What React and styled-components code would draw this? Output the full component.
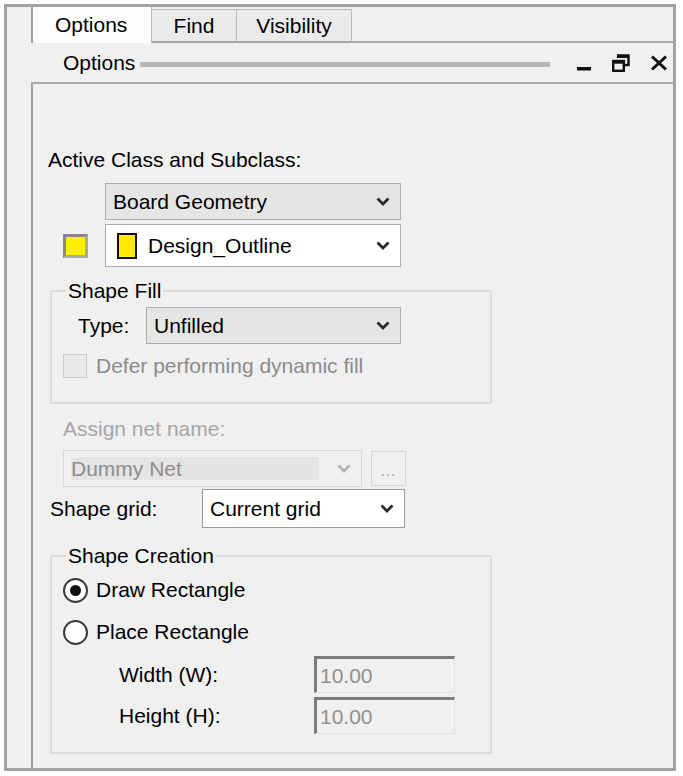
import React from "react";
import styled, { createGlobalStyle } from "styled-components";

const GlobalStyle = createGlobalStyle`
  html, body {
    margin: 0;
    padding: 0;
    background: #fff;
  }
  body {
    font-family: "Liberation Sans", Arial, sans-serif;
    font-size: 21px;
    color: #000;
  }
`;

const Frame = styled.div`
  box-sizing: border-box;
  margin: 4px 0 0 4px;
  width: 672px;
  height: 767px;
  border: 3px solid #a4a4a4;
  background: #f0f0f0;
  padding-left: 24px;
  display: flex;
  flex-direction: column;
`;

const TabStrip = styled.div`
  display: flex;
  align-items: flex-end;
  height: 36px;
  flex: 0 0 36px;
`;

const Tab = styled.div`
  box-sizing: border-box;
  height: ${(p) => (p.active ? "36px" : "34px")};
  width: ${(p) => p.w}px;
  display: flex;
  align-items: center;
  justify-content: ${(p) => (p.active ? "flex-start" : "center")};
  padding-left: ${(p) => (p.active ? "22px" : "0")};
  background: ${(p) => (p.active ? "#fdfdfd" : "#ebebeb")};
  border-left: ${(p) => (p.active ? "2px solid #a0a0a0" : "none")};
  border-right: 1px solid #b8b8b8;
  border-top: ${(p) => (p.active ? "none" : "1px solid #b8b8b8")};
  border-bottom: ${(p) => (p.active ? "none" : "2px solid #a8a8a8")};
`;

const TabFill = styled.div`
  flex: 1;
  border-bottom: 2px solid #a8a8a8;
`;

const TitleRow = styled.div`
  box-sizing: border-box;
  flex: 0 0 41px;
  display: flex;
  align-items: center;
  padding-left: 32px;
  border-bottom: 2px solid #a8a8a8;
`;

const Grip = styled.div`
  width: 410px;
  height: 5px;
  background: #b6b6b6;
  margin-left: 5px;
  margin-top: 4px;
`;

const TitleButtons = styled.div`
  display: flex;
  align-items: center;
  margin-left: 26px;
  gap: 20px;
`;

const Panel = styled.div`
  flex: 1;
  border-left: 2px solid #a0a0a0;
  padding-left: 15px;
  display: flex;
  flex-direction: column;
  align-items: flex-start;
`;

const Label = styled.div`
  line-height: 24px;
  white-space: nowrap;
  color: ${(p) => (p.disabled ? "#a6a6a6" : "#000")};
  margin-top: ${(p) => p.mt || 0}px;
  margin-left: ${(p) => p.ml || 0}px;
  width: ${(p) => (p.w ? `${p.w}px` : "auto")};
`;

const Combo = styled.div`
  box-sizing: border-box;
  width: ${(p) => p.w}px;
  height: ${(p) => p.h}px;
  margin-top: ${(p) => p.mt || 0}px;
  margin-left: ${(p) => p.ml || 0}px;
  display: flex;
  align-items: center;
  padding-left: ${(p) => p.pl || 7}px;
  padding-right: 10px;
  background: ${(p) => p.bg || "#fff"};
  border: 1px solid ${(p) => p.bc || "#adadad"};
  color: ${(p) => (p.disabled ? "#8d8d8d" : "#000")};
  white-space: nowrap;
`;

const ComboText = styled.div`
  flex: 1;
  display: flex;
  align-items: center;
  gap: 11px;
`;

const DisabledField = styled.div`
  flex: 1;
  height: 23px;
  background: #e4e4e4;
  margin-right: 18px;
  display: flex;
  align-items: center;
  color: #8d8d8d;
  padding-left: 0;
`;

const Row = styled.div`
  display: flex;
  align-items: center;
  margin-top: ${(p) => p.mt || 0}px;
  margin-left: ${(p) => p.ml || 0}px;
  height: ${(p) => (p.h ? `${p.h}px` : "auto")};
`;

const Swatch = styled.div`
  box-sizing: border-box;
  width: 25px;
  height: 24px;
  margin-left: 15px;
  margin-right: 17px;
  border: 3px solid;
  border-color: #888 #a8a8a8 #a8a8a8 #888;
  background: #ffee00;
`;

const ColorBox = styled.div`
  box-sizing: border-box;
  width: 20px;
  height: 26px;
  border: 2px solid #111;
  background: #ffea00;
  margin-left: 4px;
`;

const Group = styled.fieldset`
  box-sizing: border-box;
  width: 442px;
  margin: ${(p) => p.mt}px 0 0 2px;
  padding: ${(p) => p.pad};
  border: 2px solid #dcdcdc;
  border-radius: 2px;
  min-inline-size: 0;
`;

const Legend = styled.legend`
  margin-left: 14px;
  padding: 0 2px;
  line-height: 24px;
`;

const CheckBox = styled.div`
  box-sizing: border-box;
  width: 24px;
  height: 24px;
  border: 1px solid #c9c9c9;
  background: #e8e8e8;
  margin-left: 11px;
  margin-right: 9px;
`;

const Radio = styled.div`
  box-sizing: border-box;
  width: 25px;
  height: 25px;
  border-radius: 50%;
  border: 2px solid #3a3a3a;
  background: #fff;
  margin-left: 11px;
  margin-right: 8px;
  display: flex;
  align-items: center;
  justify-content: center;
  &::after {
    content: "";
    display: ${(p) => (p.checked ? "block" : "none")};
    width: 11px;
    height: 11px;
    border-radius: 50%;
    background: #111;
  }
`;

const EllipsisButton = styled.div`
  box-sizing: border-box;
  width: 35px;
  height: 35px;
  margin-left: 9px;
  border: 1px solid #d4d4d4;
  background: #f0f0f0;
  color: #9a9a9a;
  font-size: 15px;
  display: flex;
  align-items: flex-end;
  justify-content: center;
  padding-bottom: 6px;
  letter-spacing: 1px;
`;

const NumberField = styled.div`
  box-sizing: border-box;
  width: 141px;
  height: 37px;
  border: 1px solid #e2e2e2;
  border-top: 3px solid #7c7c7c;
  border-left: 3px solid #7c7c7c;
  background: #f0f0f0;
  color: #8f8f8f;
  display: flex;
  align-items: center;
  padding-left: 3px;
`;

function Chevron({ color = "#2a2a2a" }) {
  return (
    <svg width="14" height="9" viewBox="0 0 14 9">
      <polyline
        points="1.5,1.5 7,7 12.5,1.5"
        fill="none"
        stroke={color}
        strokeWidth="2.8"
      />
    </svg>
  );
}

function MinimizeIcon() {
  return (
    <svg width="16" height="18" viewBox="0 0 16 18">
      <rect x="1" y="13" width="14" height="3.5" fill="#111" />
    </svg>
  );
}

function RestoreIcon() {
  return (
    <svg width="18" height="18" viewBox="0 0 18 18">
      <path
        d="M5 1.5h11.5v9.5h-4.5"
        fill="none"
        stroke="#111"
        strokeWidth="2.4"
      />
      <rect x="5" y="1" width="11.5" height="3" fill="#111" />
      <rect
        x="1.2"
        y="7"
        width="10.6"
        height="9.8"
        fill="none"
        stroke="#111"
        strokeWidth="2.4"
      />
      <rect x="1" y="6.5" width="11" height="3.2" fill="#111" />
    </svg>
  );
}

function CloseIcon() {
  return (
    <svg width="18" height="16" viewBox="0 0 18 16">
      <path d="M2 1.5L16 14.5M16 1.5L2 14.5" stroke="#111" strokeWidth="3" />
    </svg>
  );
}

export default function App() {
  return (
    <>
      <GlobalStyle />
      <Frame>
        <TabStrip>
          <Tab active w={121}>
            Options
          </Tab>
          <Tab w={85}>Find</Tab>
          <Tab w={115}>Visibility</Tab>
          <TabFill />
        </TabStrip>
        <TitleRow>
          <span>Options</span>
          <Grip />
          <TitleButtons>
            <MinimizeIcon />
            <RestoreIcon />
            <CloseIcon />
          </TitleButtons>
        </TitleRow>
        <Panel>
          <Label mt={64}>Active Class and Subclass:</Label>
          <Combo w={296} h={37} mt={11} ml={57} bg="#e5e5e5">
            <ComboText>Board Geometry</ComboText>
            <Chevron />
          </Combo>
          <Row mt={4}>
            <Swatch />
            <Combo w={296} h={43} pl={7}>
              <ComboText>
                <ColorBox />
                Design_Outline
              </ComboText>
              <Chevron />
            </Combo>
          </Row>

          <Group mt={12} pad="4px 0 24px 0">
            <Legend>Shape Fill</Legend>
            <Row ml={26}>
              <Label w={68}>Type:</Label>
              <Combo w={255} h={37} bg="#e5e5e5">
                <ComboText>Unfilled</ComboText>
                <Chevron />
              </Combo>
            </Row>
            <Row mt={10}>
              <CheckBox />
              <Label disabled style={{ color: "#8b8b8b" }}>
                Defer performing dynamic fill
              </Label>
            </Row>
          </Group>

          <Label disabled mt={13} ml={15}>
            Assign net name:
          </Label>
          <Row mt={9} ml={15}>
            <Combo w={299} h={37} bg="#f0f0f0" bc="#d9d9d9" disabled>
              <DisabledField>Dummy Net</DisabledField>
              <Chevron color="#b4b4b4" />
            </Combo>
            <EllipsisButton>...</EllipsisButton>
          </Row>
          <Row mt={2} ml={2}>
            <Label w={152}>Shape grid:</Label>
            <Combo w={203} h={39} bc="#9a9a9a">
              <ComboText>Current grid</ComboText>
              <Chevron />
            </Combo>
          </Row>

          <Group mt={16} pad="1px 0 18px 0">
            <Legend>Shape Creation</Legend>
            <Row h={42}>
              <Radio checked />
              <span>Draw Rectangle</span>
            </Row>
            <Row h={42}>
              <Radio />
              <span>Place Rectangle</span>
            </Row>
            <Row mt={3} ml={67}>
              <Label w={195}>Width (W):</Label>
              <NumberField>10.00</NumberField>
            </Row>
            <Row mt={4} ml={67}>
              <Label w={195}>Height (H):</Label>
              <NumberField>10.00</NumberField>
            </Row>
          </Group>
        </Panel>
      </Frame>
    </>
  );
}
